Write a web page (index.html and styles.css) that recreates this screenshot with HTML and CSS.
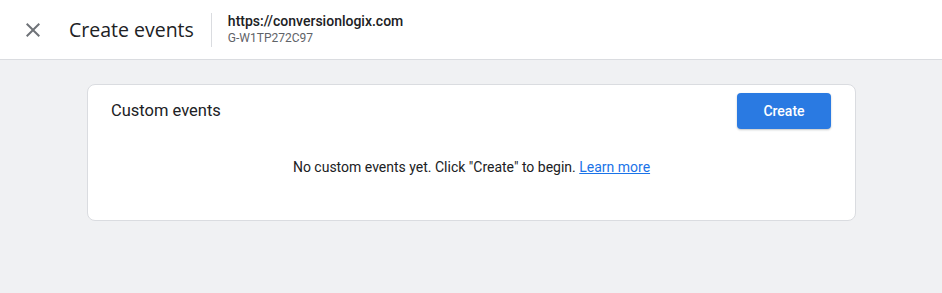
FILE: index.html
```html
<!DOCTYPE html>
<html lang="en">
<head>
    <meta charset="UTF-8">
    <meta name="viewport" content="width=device-width, initial-scale=1.0">
    <title>Create events</title>
    <link rel="stylesheet" href="styles.css">
</head>
<body>
    <header class="topbar">
        <button class="close-btn" aria-label="Close">
            <svg width="24" height="24" viewBox="0 0 24 24"><path d="M19 6.41 17.59 5 12 10.59 6.41 5 5 6.41 10.59 12 5 17.59 6.41 19 12 13.41 17.59 19 19 17.59 13.41 12z" fill="#6f7378"/></svg>
        </button>
        <h1 class="title">Create events</h1>
        <div class="stream">
            <div class="stream-url">https://conversionlogix.com</div>
            <div class="stream-id">G-W1TP272C97</div>
        </div>
    </header>

    <main class="content">
        <section class="card">
            <div class="card-head">
                <h2 class="card-title">Custom events</h2>
                <button class="create-btn">Create</button>
            </div>
            <p class="empty">No custom events yet. Click "Create" to begin. <a href="#">Learn more</a></p>
        </section>
    </main>
</body>
</html>
```

FILE: styles.css
```css
body {
    margin: 0;
    font-family: Roboto, Arial, sans-serif;
    background-color: #f0f1f3;
    color: #202124;
    height: 293px;
}

.topbar {
    display: flex;
    align-items: center;
    height: 59px;
    background-color: #fff;
    border-bottom: 1px solid #dadce0;
}

.close-btn {
    display: flex;
    align-items: center;
    justify-content: center;
    width: 40px;
    height: 40px;
    margin-left: 13px;
    padding: 0;
    border: none;
    background: none;
    cursor: pointer;
}

.title {
    margin: 0 0 0 16px;
    font-family: "Open Sans", Roboto, sans-serif;
    font-size: 19.5px;
    font-weight: 400;
    color: #202124;
    padding-right: 17px;
    border-right: 1px solid #dadce0;
    height: 34px;
    line-height: 34px;
}

.stream {
    padding-left: 16px;
    margin-top: -2px;
}

.stream-url {
    font-size: 14px;
    font-weight: 500;
    line-height: 18px;
}

.stream-id {
    font-size: 12px;
    color: #5f6368;
    line-height: 16px;
}

.content {
    padding-top: 24px;
}

.card {
    width: 767px;
    margin-left: 87px;
    background-color: #fff;
    border: 1px solid #dadce0;
    border-radius: 8px;
}

.card-head {
    display: flex;
    justify-content: space-between;
    align-items: center;
    padding: 8px 24px 0 23px;
}

.card-title {
    margin: 0;
    font-size: 16.5px;
    font-weight: 400;
    margin-top: -2px;
}

.create-btn {
    width: 94px;
    height: 36px;
    background-color: #2a7ae2;
    color: #fff;
    border: none;
    border-radius: 4px;
    font-family: Roboto, Arial, sans-serif;
    font-size: 14px;
    font-weight: 500;
    box-shadow: 0 1px 2px rgba(60, 64, 67, 0.3);
    cursor: pointer;
}

.empty {
    margin: 0;
    padding: 28px 24px 43px;
    text-align: center;
    font-size: 14px;
    line-height: 20px;
}

.empty a {
    color: #1a73e8;
}
```
